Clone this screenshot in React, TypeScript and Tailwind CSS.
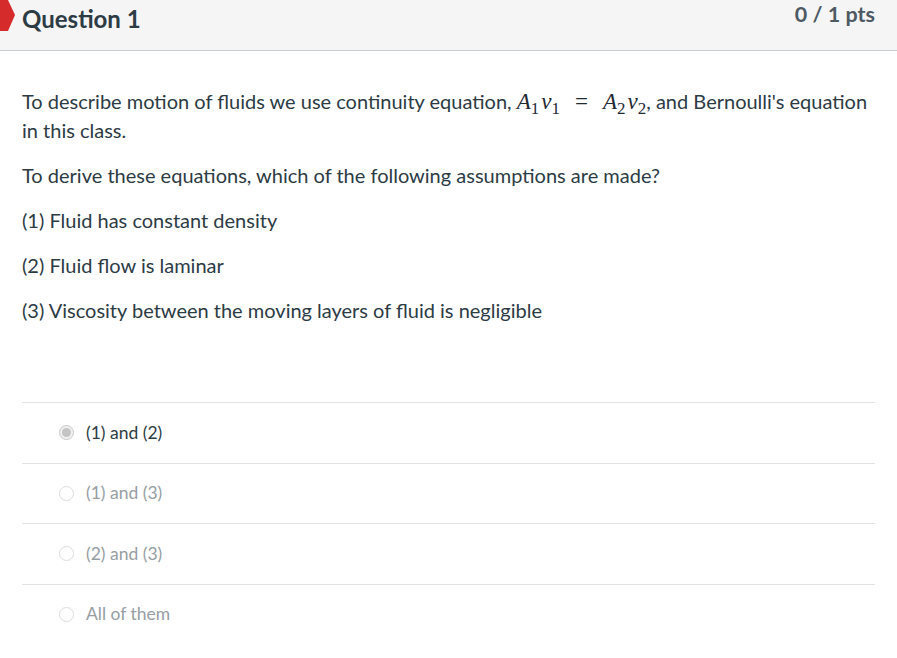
import React from 'react';

const answers = [
  { label: '(1) and (2)', selected: true },
  { label: '(1) and (3)', selected: false },
  { label: '(2) and (3)', selected: false },
  { label: 'All of them', selected: false },
];

function MathInline() {
  return (
    <span className="whitespace-nowrap text-[23px] leading-none text-[#1f2a33]" style={{ fontFamily: '"Liberation Serif", serif' }}>
      <i>A</i>
      <span className="relative top-[5px] text-[17px]">1</span>
      <i className="ml-[2px]">v</i>
      <span className="relative top-[5px] text-[17px]">1</span>
      <span className="mx-[15px]">=</span>
      <i>A</i>
      <span className="relative top-[5px] text-[17px]">2</span>
      <i className="ml-[2px]">v</i>
      <span className="relative top-[5px] text-[17px]">2</span>
    </span>
  );
}

function Radio({ selected }: { selected: boolean }) {
  return (
    <span
      className={
        'flex h-[15px] w-[15px] items-center justify-center rounded-full border ' +
        (selected ? 'border-[#c9c9c9] bg-[#f0f0f0]' : 'border-[#dcdcdc] bg-white')
      }
    >
      {selected && <span className="h-[9px] w-[9px] rounded-full bg-[#c4c4c4]" />}
    </span>
  );
}

export default function App() {
  return (
    <div className="min-h-screen w-[897px] bg-white text-[#2d3b45]" style={{ fontFamily: 'Lato, "Noto Sans", sans-serif' }}>
      {/* header */}
      <div className="relative flex h-[51px] items-start justify-between border-b border-[#c7cdd1] bg-[#f5f5f5] pl-[22px] pr-[22px]">
        <svg className="absolute left-0 top-0" width="16" height="32" viewBox="0 0 16 32">
          <path d="M0 0 H8 L15 15 L8 31 H0 Z" fill="#d62b2b" />
        </svg>
        <h2 className="mt-[4px] text-[24px] font-bold leading-[30px] text-[#2d3b45]">Question 1</h2>
        <div className="mt-[0px] text-[21.5px] font-bold leading-[28px] text-[#4d5a63]">0 / 1 pts</div>
      </div>

      {/* question text */}
      <div className="px-[22px] pt-[36px] text-[20px] leading-[29px]">
        <p>
          To describe motion of fluids we use continuity equation, <MathInline />, and Bernoulli's equation in this
          class.
        </p>
        <p className="mt-[16px]">To derive these equations, which of the following assumptions are made?</p>
        <p className="mt-[16px]">(1) Fluid has constant density</p>
        <p className="mt-[16px]">(2) Fluid flow is laminar</p>
        <p className="mt-[16px]">(3) Viscosity between the moving layers of fluid is negligible</p>
      </div>

      {/* answers */}
      <div className="mx-[22px] mt-[77px]">
        {answers.map((a) => (
          <div key={a.label} className="flex h-[60.5px] items-center border-t border-[#e3e3e3] pl-[37px]">
            <Radio selected={a.selected} />
            <span className={'ml-[12px] text-[17.5px] ' + (a.selected ? 'text-[#2d3b45]' : 'text-[#969ea4]')}>
              {a.label}
            </span>
          </div>
        ))}
      </div>
    </div>
  );
}
